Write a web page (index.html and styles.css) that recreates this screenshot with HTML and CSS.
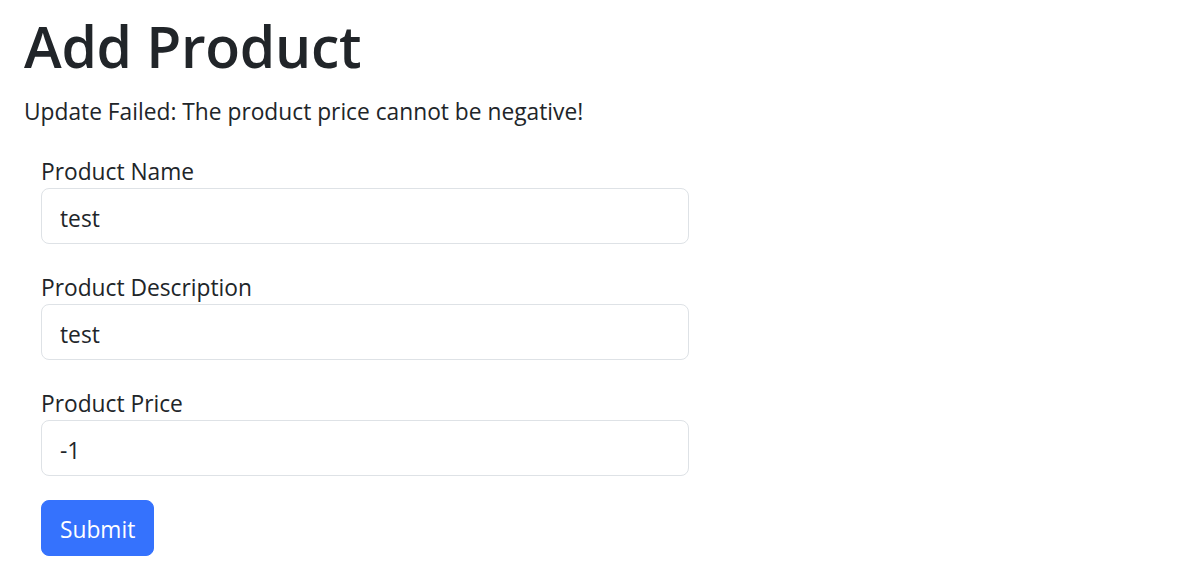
FILE: index.html
```html
<!DOCTYPE html>
<html lang="en">
<head>
<meta charset="utf-8">
<title>Add Product</title>
<link rel="stylesheet" href="styles.css">
</head>
<body>
<main class="page">
  <h1 class="title">Add Product</h1>
  <p class="message">Update Failed: The product price cannot be negative!</p>
  <form class="product-form">
    <div class="field">
      <label class="field-label" for="name">Product Name</label>
      <input class="field-input" id="name" type="text" value="test">
    </div>
    <div class="field">
      <label class="field-label" for="desc">Product Description</label>
      <input class="field-input" id="desc" type="text" value="test">
    </div>
    <div class="field">
      <label class="field-label" for="price">Product Price</label>
      <input class="field-input" id="price" type="text" value="-1">
    </div>
    <button class="submit-btn" type="button">Submit</button>
  </form>
</main>
</body>
</html>
```

FILE: styles.css
```css
* { box-sizing: border-box; }
html, body { margin: 0; background: #fff; }
body {
  font-family: "Open Sans", "Noto Sans", sans-serif;
  color: #212529;
  font-size: 22.75px;
  line-height: 36px;
}
.page {
  padding: 8px 24px;
}
.title {
  margin: 0 0 12px;
  padding-top: 4px;
  font-size: 57px;
  line-height: 68px;
  font-weight: 600;
  letter-spacing: -0.3px;
}
.message {
  margin: 0 0 24px;
  padding-top: 4px;
  line-height: 32px;
}
.product-form {
  margin-left: 17px;
  width: 648px;
  display: flex;
  flex-direction: column;
  gap: 24px;
  align-items: flex-start;
}
.field {
  display: flex;
  flex-direction: column;
  width: 100%;
}
.field-label {
  display: block;
  padding-top: 4px;
  line-height: 32px;
}
.field-input {
  width: 100%;
  height: 56px;
  padding: 11px 18px 7px;
  font: inherit;
  line-height: 36px;
  color: #212529;
  border: 1px solid #dee2e6;
  border-radius: 8px;
  background: #fff;
  outline: none;
}
.submit-btn {
  height: 56px;
  padding: 11px 18px 7px;
  font: inherit;
  line-height: 36px;
  color: #fff;
  background: #3572fd;
  border: 1px solid #3572fd;
  border-radius: 8px;
}
```
